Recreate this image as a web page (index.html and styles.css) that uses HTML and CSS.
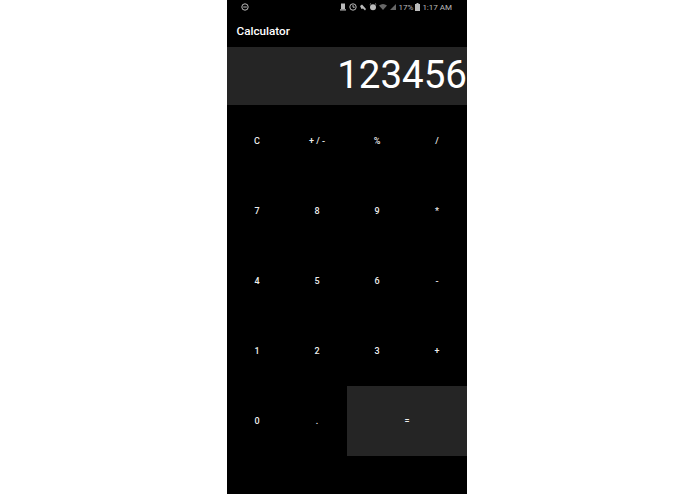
FILE: index.html
```html
<!DOCTYPE html>
<html lang="en">
<head>
    <meta charset="UTF-8">
    <meta name="viewport" content="width=device-width, initial-scale=1.0">
    <title>Calculator</title>
    <link rel="stylesheet" href="styles.css">
</head>
<body>
    <div class="phone">
        <div class="status">
            <svg class="icon dnd" viewBox="0 0 8 8"><circle cx="4" cy="4" r="3.2"/><path d="M2.2 4h3.6"/></svg>
            <div class="status-right">
                <svg class="icon" viewBox="0 0 8 8"><path class="solid" d="M2 .5h4v5.500H2zM1 6.200h6v1.300H1z"/></svg>
                <svg class="icon" viewBox="0 0 8 8"><circle cx="4" cy="4" r="3.2"/><path d="M4 2v2.200h1.800"/></svg>
                <svg class="icon" viewBox="0 0 8 8"><path class="solid" d="M1 3l2-1.500L7 6 6 7.500 4 5.500 2.500 6z"/></svg>
                <svg class="icon" viewBox="0 0 8 8"><circle class="solid" cx="4" cy="4.300" r="3"/><path d="M.8 1.500l1-.8M7.200 1.500l-1-.8"/></svg>
                <svg class="icon" viewBox="0 0 8 8"><path class="solid dim" d="M0 2.500Q4 -.5 8 2.500L4 7z"/></svg>
                <svg class="icon" viewBox="0 0 8 8"><path class="solid dim" d="M1 7L7 1v6z"/></svg>
                <span>17%</span>
                <svg class="icon battery" viewBox="0 0 5 8"><path class="solid" d="M1.500 0h2v1H5v7H0V1h1.500z"/></svg>
                <span>1:17 AM</span>
            </div>
        </div>
        <div class="title">Calculator</div>
        <div class="display">123456</div>
        <div class="keys">
            <button>C</button>
            <button>+ / -</button>
            <button>%</button>
            <button>/</button>
            <button>7</button>
            <button>8</button>
            <button>9</button>
            <button>*</button>
            <button>4</button>
            <button>5</button>
            <button>6</button>
            <button>-</button>
            <button>1</button>
            <button>2</button>
            <button>3</button>
            <button>+</button>
            <button>0</button>
            <button>.</button>
            <button class="equals">=</button>
        </div>
    </div>
</body>
</html>
```
FILE: styles.css
```css
body {
    margin: 0;
    background-color: #fff;
    font-family: Roboto, sans-serif;
}

.phone {
    width: 240px;
    height: 494px;
    margin-left: 227px;
    background-color: #000;
    color: #fff;
    overflow: hidden;
}

.status {
    height: 14px;
    display: flex;
    align-items: center;
    justify-content: space-between;
    padding: 0 15px 0 14px;
    color: #bbb;
    font-size: 8px;
}

.status-right {
    display: flex;
    align-items: center;
    gap: 2px;
}

.icon {
    width: 8px;
    height: 8px;
    fill: none;
    stroke: #bbb;
    stroke-width: 1;
}

.icon .solid {
    fill: #bbb;
    stroke: none;
}

.icon .dim {
    fill: #666;
}

.icon.battery {
    width: 5px;
}

.title {
    height: 33px;
    padding-left: 9.5px;
    line-height: 34px;
    font-size: 11.7px;
    font-weight: 500;
}

.display {
    height: 58px;
    background-color: #252525;
    text-align: right;
    font-size: 38.5px;
    line-height: 55px;
    white-space: nowrap;
}

.keys {
    display: grid;
    grid-template-columns: repeat(4, 60px);
    grid-auto-rows: 70px;
    padding-top: 1px;
}

.keys button {
    padding: 0;
    border: none;
    background: none;
    color: #eee;
    font-family: Roboto, sans-serif;
    font-size: 9px;
    font-weight: 500;
}

.keys .equals {
    grid-column: span 2;
    background-color: #252525;
}
```
